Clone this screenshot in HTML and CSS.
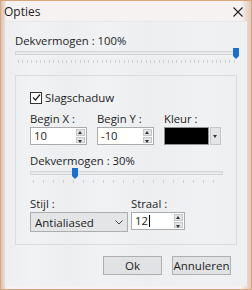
FILE: index.html
```html
<!DOCTYPE html>
<html lang="nl">
<head>
    <meta charset="UTF-8">
    <title>Opties</title>
    <link rel="stylesheet" href="styles.css">
</head>
<body>

    <!-- Dialog window -->
    <div class="window">
        <div class="titlebar">
            <span class="title">Opties</span>
            <svg class="close" width="10" height="10" viewBox="0 0 10 10">
                <path d="M0.5 0.5 L9.5 9.5 M9.5 0.5 L0.5 9.5" stroke="#222" stroke-width="1.1"/>
            </svg>
        </div>

        <div class="client">
            <!-- Overall opacity -->
            <div class="label">Dekvermogen : 100%</div>
            <div class="slider wide">
                <div class="track"></div>
                <svg class="thumb" style="left: 218px" width="6" height="11" viewBox="0 0 6 11">
                    <path d="M0 0 H6 V8 L3 11 L0 8 Z" fill="#1a6fc9"/>
                </svg>
            </div>
            <div class="ticks dense"></div>

            <!-- Shadow options -->
            <div class="group">
                <label class="check-row">
                    <span class="checkbox">
                        <svg width="9" height="9" viewBox="0 0 9 9">
                            <path d="M1 4.5 L3.5 7 L8 1.5" fill="none" stroke="#222" stroke-width="1.2"/>
                        </svg>
                    </span>
                    Slagschaduw
                </label>

                <div class="row">
                    <div class="col">
                        <div class="label">Begin X :</div>
                        <div class="spin-input">
                            <span class="value">10</span>
                            <span class="spin"><span class="up"></span><span class="down"></span></span>
                        </div>
                    </div>
                    <div class="col">
                        <div class="label">Begin Y :</div>
                        <div class="spin-input">
                            <span class="value">-10</span>
                            <span class="spin"><span class="up"></span><span class="down"></span></span>
                        </div>
                    </div>
                    <div class="col">
                        <div class="label">Kleur :</div>
                        <div class="color-pick">
                            <span class="swatch"></span>
                            <span class="drop"><span class="down"></span></span>
                        </div>
                    </div>
                </div>

                <div class="label">Dekvermogen : 30%</div>
                <div class="slider narrow">
                    <div class="track"></div>
                    <svg class="thumb" style="left: 42px" width="6" height="11" viewBox="0 0 6 11">
                        <path d="M0 0 H6 V8 L3 11 L0 8 Z" fill="#1a6fc9"/>
                    </svg>
                </div>
                <div class="ticks sparse narrow"></div>

                <div class="row bottom-row">
                    <div class="col">
                        <div class="label">Stijl :</div>
                        <div class="select">
                            <span>Antialiased</span>
                            <svg width="8" height="5" viewBox="0 0 8 5">
                                <path d="M0.5 0.5 L4 4 L7.5 0.5" fill="none" stroke="#444" stroke-width="1"/>
                            </svg>
                        </div>
                    </div>
                    <div class="col">
                        <div class="label">Straal :</div>
                        <div class="spin-input small">
                            <span class="value">12<span class="caret"></span></span>
                            <span class="spin"><span class="up"></span><span class="down"></span></span>
                        </div>
                    </div>
                </div>
            </div>

            <!-- Dialog buttons -->
            <div class="buttons">
                <button class="btn ok">Ok</button>
                <button class="btn">Annuleren</button>
            </div>
        </div>
    </div>

</body>
</html>
```

FILE: styles.css
```css
body {
    margin: 0;
    font-family: "Open Sans", "Noto Sans", sans-serif;
    font-size: 11.3px;
    color: #1e1e1e;
    background: #f2efee;
}

/* Window frame */
.window {
    width: 250px;
    height: 288px;
    border: 1px solid #dba57a;
    background: linear-gradient(90deg, #dcc3b6 0, #ecdcd4 4px, #f5f2f1 5px, #f5f2f1 240px, #ead7cd 246px, #e2c9bb 250px);
    display: flex;
    flex-direction: column;
}

.titlebar {
    height: 20px;
    display: flex;
    align-items: center;
    justify-content: space-between;
    padding: 0 8px 0 3px;
}

.title {
    font-size: 12px;
}

.close {
    margin-top: 1px;
}

.client {
    flex: 1;
    margin: 0 4px 3px 4px;
    padding: 11px 10px 0 10px;
    background: linear-gradient(90deg, #eceef0 0, #f0f2f3 30px, #eceef0 60px, #f1f2f3 100px, #eceef0 140px, #f0f1f2 200px, #edeff1 242px);
    border-top: 1px solid #e8e8e8;
}

.label {
    line-height: 15px;
    height: 15px;
}

/* Sliders */
.slider {
    position: relative;
    height: 11px;
}

.slider.wide {
    width: 221px;
}

.slider.narrow,
.ticks.narrow {
    width: 193px;
}

.track {
    position: relative;
    top: 3px;
    height: 2px;
    background: #e7e9ea;
    border: 1px solid #d4d6d8;
}

.thumb {
    position: absolute;
    top: 0;
}

.ticks {
    height: 3px;
    margin-top: 1px;
    margin-left: 3px;
}

.ticks.dense {
    width: 218px;
    background: repeating-linear-gradient(90deg, #cdd0d2 0, #cdd0d2 1px, transparent 1px, transparent 4.4px);
}

.ticks.sparse {
    width: 190px;
    background: repeating-linear-gradient(90deg, #cdd0d2 0, #cdd0d2 1px, transparent 1px, transparent 10px);
}

/* Group box */
.group {
    margin-top: 12px;
    height: 154px;
    border: 1px solid #dadcdd;
    padding: 14px 14px 0 14px;
}

.check-row {
    display: flex;
    align-items: center;
    gap: 3px;
    height: 15px;
    font-size: 11.5px;
}

.checkbox {
    width: 10px;
    height: 10px;
    border: 1px solid #333;
    background: #fff;
    display: flex;
    align-items: center;
    justify-content: center;
}

.row {
    display: flex;
    gap: 10px;
    margin-top: 6px;
    margin-bottom: 8px;
}

.bottom-row {
    margin-top: 13px;
}

.col {
    width: 57px;
}

/* Inputs */
.spin-input {
    width: 55px;
    height: 16px;
    border: 1px solid #a9abad;
    background: #fff;
    display: flex;
    justify-content: space-between;
    margin-top: 1px;
}

.spin-input.small {
    width: 52px;
}

.value {
    line-height: 16px;
    padding-left: 3px;
    display: flex;
    align-items: center;
}

.caret {
    width: 1px;
    height: 12px;
    background: #000;
    margin-left: 1px;
}

.spin {
    width: 9px;
    display: flex;
    flex-direction: column;
    gap: 1px;
    padding: 1px;
}

.spin .up,
.spin .down {
    flex: 1;
    background: #e3e4e5;
    border: 1px solid #c4c6c8;
    position: relative;
}

.up::after,
.down::after {
    content: "";
    position: absolute;
    left: 1px;
    border-left: 2.5px solid transparent;
    border-right: 2.5px solid transparent;
}

.up::after {
    top: 1px;
    border-bottom: 3px solid #333;
}

.down::after {
    top: 2px;
    border-top: 3px solid #333;
}

.color-pick {
    width: 57px;
    height: 18px;
    margin-top: 1px;
    display: flex;
    gap: 1px;
}

.swatch {
    width: 45px;
    background: #000;
    border: 1px solid #8e9092;
}

.drop {
    width: 9px;
    background: #e3e4e5;
    border: 1px solid #c4c6c8;
    position: relative;
}

.drop .down {
    position: absolute;
    top: 5px;
    left: 1px;
}

.select {
    width: 88px;
    height: 18px;
    border: 1px solid #adadad;
    background: #e4e5e6;
    display: flex;
    align-items: center;
    justify-content: space-between;
    padding: 0 4px 0 4px;
    margin-top: 1px;
    font-size: 11.5px;
}

.bottom-row .col:first-child {
    width: 91px;
}

/* Buttons */
.buttons {
    display: flex;
    justify-content: flex-end;
    gap: 10px;
    margin-top: 11px;
    padding-right: 6px;
}

.btn {
    font-family: inherit;
    font-size: 11.5px;
    color: #1e1e1e;
    height: 19px;
    width: 59px;
    background: #e1e2e3;
    border: 1px solid #adafb0;
    padding: 0;
}
```
